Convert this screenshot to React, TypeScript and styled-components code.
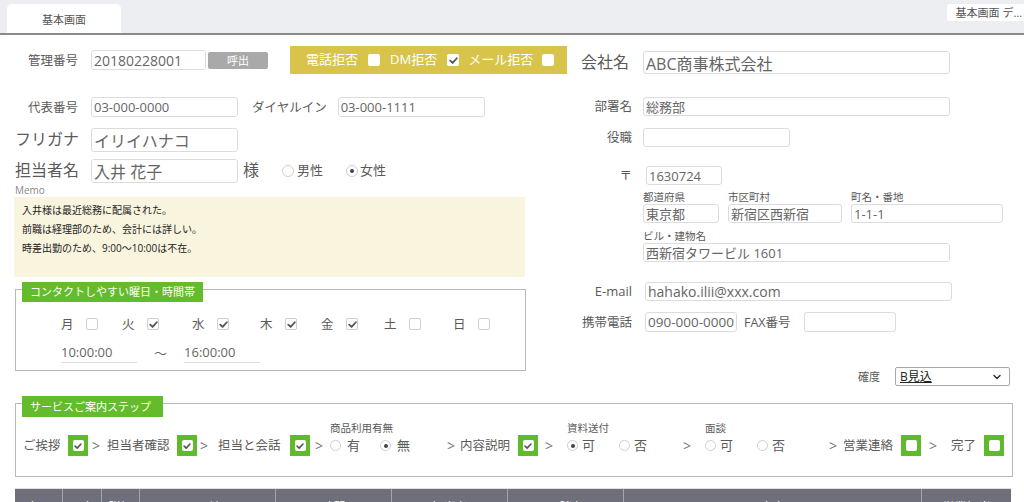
import React from "react";
import styled, { createGlobalStyle } from "styled-components";
import { ChevronDown } from "lucide-react";

const GlobalStyle = createGlobalStyle`
  html, body { margin: 0; padding: 0; background: #fff; }
  body {
    font-family: "Open Sans", "Noto Sans CJK JP", sans-serif;
    color: #555;
    overflow: hidden;
  }
  * { box-sizing: border-box; }
`;

const Page = styled.div`
  width: 1024px;
  height: 502px;
  overflow: hidden;
  background: #fff;
`;

const TabBar = styled.div`
  height: 35px;
  background: #eceef2;
  border-bottom: 2px solid #8a8a8a;
  display: flex;
  align-items: flex-start;
  padding: 4px 0 0 7px;
  overflow: hidden;
`;

const MainTab = styled.div`
  width: 114px;
  height: 29px;
  background: #fff;
  border-radius: 5px 5px 0 0;
  display: flex;
  align-items: center;
  justify-content: center;
  font-size: 11px;
  color: #555;
`;

const SideTab = styled.div`
  margin-left: auto;
  height: 17px;
  background: #fff;
  border-radius: 3px 0 0 3px;
  padding: 0 2px 0 9px;
  font-size: 11px;
  line-height: 17px;
  white-space: nowrap;
  color: #555;
`;

const Body = styled.div`
  padding: 0 12px 0 15px;
`;

const TopArea = styled.div`
  display: flex;
  align-items: flex-start;
`;

const LeftCol = styled.div`
  width: 560px;
  flex-shrink: 0;
  display: flex;
  flex-direction: column;
`;

const RightCol = styled.div`
  width: 435px;
  flex-shrink: 0;
  display: flex;
  flex-direction: column;
`;

const Row = styled.div<{ $mt?: number; $h: number; $end?: boolean }>`
  display: flex;
  align-items: center;
  justify-content: ${(p) => (p.$end ? "flex-end" : "flex-start")};
  margin-top: ${(p) => p.$mt ?? 0}px;
  height: ${(p) => p.$h}px;
`;

const Label = styled.span<{ $w?: number; $size?: number; $ml?: number; $left?: boolean }>`
  width: ${(p) => (p.$w ? `${p.$w}px` : "auto")};
  flex-shrink: 0;
  margin-left: ${(p) => p.$ml ?? 0}px;
  font-size: ${(p) => p.$size ?? 12.5}px;
  line-height: 1.2;
  text-align: ${(p) => (p.$left ? "left" : "right")};
  color: #5a5a5a;
  white-space: nowrap;
`;

const Field = styled.input<{ $w: number; $h: number; $size?: number; $ml?: number }>`
  width: ${(p) => p.$w}px;
  height: ${(p) => p.$h}px;
  margin: 0 0 0 ${(p) => p.$ml ?? 0}px;
  flex-shrink: 0;
  border: 1px solid #dcdcdc;
  border-radius: 3px;
  background: #fff;
  padding: 0 1px 0 2px;
  font-family: "Open Sans", "Noto Sans CJK JP", sans-serif;
  font-size: ${(p) => p.$size ?? 13}px;
  color: #666;
  outline: none;
`;

const CallButton = styled.button`
  margin-left: 2px;
  width: 60px;
  height: 17px;
  background: #a9a9a9;
  border: none;
  border-radius: 2px;
  color: #fff;
  font-size: 11px;
  font-family: "Open Sans", "Noto Sans CJK JP", sans-serif;
  padding: 0;
  line-height: 17px;
`;

const RefusalBox = styled.div`
  margin-left: 22px;
  width: 277px;
  height: 28px;
  background: #d8c44a;
  display: flex;
  align-items: center;
  padding-left: 16px;
`;

const RefusalText = styled.span<{ $ml?: number }>`
  margin-left: ${(p) => p.$ml ?? 0}px;
  color: #fff;
  font-size: 13px;
  line-height: 1.2;
  white-space: nowrap;
`;

const CheckSquare = styled.span<{ $ml?: number; $bordered?: boolean; $size?: number }>`
  display: inline-flex;
  align-items: center;
  justify-content: center;
  flex-shrink: 0;
  width: ${(p) => p.$size ?? 12}px;
  height: ${(p) => p.$size ?? 12}px;
  margin-left: ${(p) => p.$ml ?? 0}px;
  background: #fff;
  border-radius: 2px;
  border: ${(p) => (p.$bordered ? "1px solid #cfcfcf" : "none")};
`;

const CheckMark = ({ size = 9 }: { size?: number }) => (
  <svg width={size} height={size} viewBox="0 0 10 10">
    <path
      d="M1.4 5.2 L4 7.7 L8.7 2.5"
      fill="none"
      stroke="#555"
      strokeWidth="2"
      strokeLinecap="round"
      strokeLinejoin="round"
    />
  </svg>
);

function Check({
  checked,
  ml,
  bordered,
  size,
}: {
  checked?: boolean;
  ml?: number;
  bordered?: boolean;
  size?: number;
}) {
  return (
    <CheckSquare $ml={ml} $bordered={bordered} $size={size}>
      {checked && <CheckMark size={size ? size - 3 : 9} />}
    </CheckSquare>
  );
}

const RadioCircle = styled.span<{ $on?: boolean; $ml?: number; $size?: number }>`
  width: ${(p) => p.$size ?? 11}px;
  height: ${(p) => p.$size ?? 11}px;
  margin-left: ${(p) => p.$ml ?? 0}px;
  border-radius: 50%;
  border: 1px solid #cfcfcf;
  background: #fff;
  flex-shrink: 0;
  display: inline-flex;
  align-items: center;
  justify-content: center;
  &::after {
    content: "";
    width: 4px;
    height: 4px;
    border-radius: 50%;
    background: #444;
    display: ${(p) => (p.$on ? "block" : "none")};
  }
`;

const RadioText = styled.span<{ $ml?: number; $size?: number }>`
  margin-left: ${(p) => p.$ml ?? 3}px;
  font-size: ${(p) => p.$size ?? 13}px;
  line-height: 1.2;
  color: #5a5a5a;
  white-space: nowrap;
`;

const MemoLabel = styled.div`
  margin-top: 2px;
  height: 10px;
  font-size: 10px;
  line-height: 10px;
  color: #888;
`;

const MemoBox = styled.div`
  margin: 2px 0 0 -1px;
  width: 511px;
  height: 80px;
  background: #f8f4de;
  padding: 4px 8px;
  font-size: 10px;
  line-height: 19px;
  color: #222;
`;

const Group = styled.fieldset<{ $w: number; $mt: number; $pt: number; $pb: number }>`
  margin: ${(p) => p.$mt}px 0 0 0;
  width: ${(p) => p.$w}px;
  min-width: 0;
  padding: ${(p) => p.$pt}px 0 ${(p) => p.$pb}px 0;
  border: 1px solid #b9b9b9;
`;

const GroupLegend = styled.legend<{ $w: number; $h: number }>`
  position: relative;
  top: 3px;
  margin-left: 6px;
  width: ${(p) => p.$w}px;
  height: ${(p) => p.$h}px;
  line-height: ${(p) => p.$h}px;
  padding: 0 0 0 8px;
  background: #64bb2b;
  color: #fff;
  font-size: 11px;
  white-space: nowrap;
`;

const DayRow = styled.div`
  display: flex;
  align-items: center;
  height: 20px;
  padding-left: 45px;
`;

const DayItem = styled.div<{ $w?: number }>`
  width: ${(p) => (p.$w ? `${p.$w}px` : "auto")};
  display: flex;
  align-items: center;
  flex-shrink: 0;
`;

const DayChar = styled.span`
  width: 25px;
  font-size: 12.5px;
  line-height: 1.2;
  color: #5a5a5a;
`;

const TimeRow = styled.div`
  display: flex;
  align-items: flex-end;
  height: 21px;
  margin-top: 8px;
  padding-left: 45px;
`;

const TimeField = styled.div<{ $ml?: number }>`
  width: 76px;
  height: 21px;
  margin-left: ${(p) => p.$ml ?? 0}px;
  border-bottom: 1px solid #dcdcdc;
  font-size: 13px;
  line-height: 20px;
  color: #666;
`;

const Tilde = styled.span<{ $ml: number }>`
  margin-left: ${(p) => p.$ml}px;
  align-self: center;
  font-size: 13px;
  color: #666;
`;

const AddrRow = styled.div<{ $mt: number }>`
  display: flex;
  margin-top: ${(p) => p.$mt}px;
  padding-left: 68px;
`;

const AddrField = styled.div<{ $ml?: number }>`
  display: flex;
  flex-direction: column;
  margin-left: ${(p) => p.$ml ?? 0}px;
`;

const AddrLabel = styled.span`
  height: 11px;
  font-size: 10.5px;
  line-height: 11px;
  color: #5a5a5a;
  margin-bottom: 1px;
  white-space: nowrap;
`;

const SelectBox = styled.div`
  margin-left: 15px;
  width: 115px;
  height: 19px;
  border: 1px solid #a8a8a8;
  border-radius: 2px;
  display: flex;
  align-items: center;
  justify-content: space-between;
  padding: 0 6px 0 4px;
  font-size: 12px;
  color: #222;
  background: #fff;
`;

const SelectText = styled.span`
  text-decoration: underline;
  line-height: 1;
`;

const StepRow = styled.div`
  display: flex;
  align-items: flex-end;
  height: 35px;
  padding-left: 7px;
`;

const StepCell = styled.div<{ $w: number }>`
  width: ${(p) => p.$w}px;
  height: 21px;
  flex-shrink: 0;
  display: flex;
  align-items: center;
`;

const StepText = styled.span`
  font-size: 12.5px;
  line-height: 1.2;
  color: #5a5a5a;
  white-space: nowrap;
`;

const Arrow = styled.span`
  font-size: 14px;
  line-height: 1;
  color: #777;
  font-family: "Open Sans", sans-serif;
`;

const GreenFrame = styled.span`
  width: 20px;
  height: 21px;
  background: #5fbb2b;
  display: inline-flex;
  align-items: center;
  justify-content: center;
  flex-shrink: 0;
`;

const ChoiceGroup = styled.div<{ $w: number }>`
  width: ${(p) => p.$w}px;
  flex-shrink: 0;
  display: flex;
  flex-direction: column;
`;

const ChoiceLabel = styled.span`
  height: 14px;
  font-size: 10.5px;
  line-height: 14px;
  color: #5a5a5a;
  white-space: nowrap;
`;

const ChoiceRow = styled.div`
  display: flex;
  align-items: center;
  height: 21px;
`;

const ChoiceOption = styled.div<{ $w?: number }>`
  width: ${(p) => (p.$w ? `${p.$w}px` : "auto")};
  display: flex;
  align-items: center;
  flex-shrink: 0;
`;

const TableHead = styled.div`
  margin-top: 11px;
  width: 996px;
  height: 30px;
  display: grid;
  grid-template-columns: 48px 39px 38px 136px 116px 116px 116px 298px 89px;
  background: #6f6f7b;
  border-top: 1px solid #dfdfe3;
`;

const HeadCell = styled.div<{ $last?: boolean }>`
  display: flex;
  align-items: center;
  justify-content: center;
  color: #fff;
  font-size: 12px;
  padding-top: 6px;
  border-right: ${(p) => (p.$last ? "none" : "1px solid #a3a3ab")};
  white-space: nowrap;
  overflow: hidden;
`;

function GreenCheck({ checked }: { checked?: boolean }) {
  return (
    <GreenFrame>
      <Check checked={checked} size={11} />
    </GreenFrame>
  );
}

const days = [
  { c: "月", w: 61, on: false },
  { c: "火", w: 70, on: true },
  { c: "水", w: 68, on: true },
  { c: "木", w: 61, on: true },
  { c: "金", w: 63, on: true },
  { c: "土", w: 69, on: false },
  { c: "日", w: 0, on: false },
];

const heads = ["表示", "入力", "詳細", "日付", "時間", "担当者", "面談者", "内容", "営業担当"];

export default function App() {
  return (
    <>
      <GlobalStyle />
      <Page>
        <TabBar>
          <MainTab>基本画面</MainTab>
          <SideTab>基本画面 デ…</SideTab>
        </TabBar>
        <Body>
          <TopArea>
            <LeftCol>
              <Row $mt={11} $h={28}>
                <Label $w={63}>管理番号</Label>
                <Field $ml={13} $w={115} $h={20} $size={14} defaultValue="20180228001" readOnly />
                <CallButton>呼出</CallButton>
                <RefusalBox>
                  <RefusalText>電話拒否</RefusalText>
                  <Check ml={10} />
                  <RefusalText $ml={10}>DM拒否</RefusalText>
                  <Check ml={10} checked />
                  <RefusalText $ml={9}>メール拒否</RefusalText>
                  <Check ml={9} />
                </RefusalBox>
              </Row>
              <Row $mt={23} $h={20}>
                <Label $w={63}>代表番号</Label>
                <Field $ml={13} $w={147} $h={20} defaultValue="03-000-0000" readOnly />
                <Label $ml={14} $left>ダイヤルイン</Label>
                <Field $ml={11} $w={147} $h={20} defaultValue="03-000-1111" readOnly />
              </Row>
              <Row $mt={11} $h={24}>
                <Label $w={63} $size={16}>フリガナ</Label>
                <Field $ml={13} $w={147} $h={24} $size={16} defaultValue="イリイハナコ" readOnly />
              </Row>
              <Row $mt={7} $h={24}>
                <Label $w={63} $size={16}>担当者名</Label>
                <Field $ml={13} $w={147} $h={24} $size={16} defaultValue="入井 花子" readOnly />
                <Label $ml={5} $size={16} $left>様</Label>
                <RadioCircle $ml={23} $size={12} />
                <RadioText $ml={3}>男性</RadioText>
                <RadioCircle $ml={23} $size={12} $on />
                <RadioText $ml={2}>女性</RadioText>
              </Row>
              <MemoLabel>Memo</MemoLabel>
              <MemoBox>
                <div>入井様は最近総務に配属された。</div>
                <div>前職は経理部のため、会計には詳しい。</div>
                <div>時差出勤のため、9:00〜10:00は不在。</div>
              </MemoBox>
              <Group $w={511} $mt={2} $pt={15} $pb={7}>
                <GroupLegend $w={181} $h={20}>コンタクトしやすい曜日・時間帯</GroupLegend>
                <DayRow>
                  {days.map((d) => (
                    <DayItem key={d.c} $w={d.w || undefined}>
                      <DayChar>{d.c}</DayChar>
                      <Check bordered checked={d.on} />
                    </DayItem>
                  ))}
                </DayRow>
                <TimeRow>
                  <TimeField>10:00:00</TimeField>
                  <Tilde $ml={17}>〜</Tilde>
                  <TimeField $ml={17}>16:00:00</TimeField>
                </TimeRow>
              </Group>
            </LeftCol>

            <RightCol>
              <Row $mt={16} $h={23}>
                <Label $w={54} $size={16}>会社名</Label>
                <Field $ml={14} $w={307} $h={23} $size={16} defaultValue="ABC商事株式会社" readOnly />
              </Row>
              <Row $mt={23} $h={19}>
                <Label $w={57}>部署名</Label>
                <Field $ml={11} $w={307} $h={19} defaultValue="総務部" readOnly />
              </Row>
              <Row $mt={12} $h={19}>
                <Label $w={57}>役職</Label>
                <Field $ml={11} $w={147} $h={19} readOnly />
              </Row>
              <Row $mt={19} $h={19}>
                <Label $w={57}>〒</Label>
                <Field $ml={14} $w={76} $h={19} defaultValue="1630724" readOnly />
              </Row>
              <AddrRow $mt={7}>
                <AddrField>
                  <AddrLabel>都道府県</AddrLabel>
                  <Field $w={76} $h={19} defaultValue="東京都" readOnly />
                </AddrField>
                <AddrField $ml={9}>
                  <AddrLabel>市区町村</AddrLabel>
                  <Field $w={114} $h={19} defaultValue="新宿区西新宿" readOnly />
                </AddrField>
                <AddrField $ml={9}>
                  <AddrLabel>町名・番地</AddrLabel>
                  <Field $w={152} $h={19} defaultValue="1-1-1" readOnly />
                </AddrField>
              </AddrRow>
              <AddrRow $mt={8}>
                <AddrField>
                  <AddrLabel>ビル・建物名</AddrLabel>
                  <Field $w={307} $h={19} defaultValue="西新宿タワービル 1601" readOnly />
                </AddrField>
              </AddrRow>
              <Row $mt={20} $h={19}>
                <Label $w={57} $size={13}>E-mail</Label>
                <Field $ml={13} $w={307} $h={19} $size={14} defaultValue="hahako.ilii@xxx.com" readOnly />
              </Row>
              <Row $mt={11} $h={20}>
                <Label $w={57}>携帯電話</Label>
                <Field $ml={13} $w={92} $h={20} $size={13.5} defaultValue="090-000-0000" readOnly />
                <Label $ml={7} $left>FAX番号</Label>
                <Field $ml={13} $w={92} $h={20} readOnly />
              </Row>
              <Row $mt={35} $h={19} $end>
                <Label $size={11}>確度</Label>
                <SelectBox>
                  <SelectText>B見込</SelectText>
                  <ChevronDown size={12} strokeWidth={3} color="#333" />
                </SelectBox>
              </Row>
            </RightCol>
          </TopArea>

          <Group $w={998} $mt={7} $pt={7} $pb={20}>
            <GroupLegend $w={141} $h={21}>サービスご案内ステップ</GroupLegend>
            <StepRow>
              <StepCell $w={45}><StepText>ご挨拶</StepText></StepCell>
              <StepCell $w={24}><GreenCheck checked /></StepCell>
              <StepCell $w={15}><Arrow>&gt;</Arrow></StepCell>
              <StepCell $w={70}><StepText>担当者確認</StepText></StepCell>
              <StepCell $w={23}><GreenCheck checked /></StepCell>
              <StepCell $w={18}><Arrow>&gt;</Arrow></StepCell>
              <StepCell $w={72}><StepText>担当と会話</StepText></StepCell>
              <StepCell $w={25}><GreenCheck checked /></StepCell>
              <StepCell $w={15}><Arrow>&gt;</Arrow></StepCell>
              <ChoiceGroup $w={117}>
                <ChoiceLabel>商品利用有無</ChoiceLabel>
                <ChoiceRow>
                  <ChoiceOption $w={50}>
                    <RadioCircle />
                    <RadioText $ml={6}>有</RadioText>
                  </ChoiceOption>
                  <ChoiceOption>
                    <RadioCircle $on />
                    <RadioText $ml={6}>無</RadioText>
                  </ChoiceOption>
                </ChoiceRow>
              </ChoiceGroup>
              <StepCell $w={13}><Arrow>&gt;</Arrow></StepCell>
              <StepCell $w={58}><StepText>内容説明</StepText></StepCell>
              <StepCell $w={27}><GreenCheck checked /></StepCell>
              <StepCell $w={22}><Arrow>&gt;</Arrow></StepCell>
              <ChoiceGroup $w={116}>
                <ChoiceLabel>資料送付</ChoiceLabel>
                <ChoiceRow>
                  <ChoiceOption $w={52}>
                    <RadioCircle $on />
                    <RadioText $ml={4}>可</RadioText>
                  </ChoiceOption>
                  <ChoiceOption>
                    <RadioCircle />
                    <RadioText $ml={4}>否</RadioText>
                  </ChoiceOption>
                </ChoiceRow>
              </ChoiceGroup>
              <StepCell $w={22}><Arrow>&gt;</Arrow></StepCell>
              <ChoiceGroup $w={124}>
                <ChoiceLabel>面談</ChoiceLabel>
                <ChoiceRow>
                  <ChoiceOption $w={52}>
                    <RadioCircle />
                    <RadioText $ml={4}>可</RadioText>
                  </ChoiceOption>
                  <ChoiceOption>
                    <RadioCircle />
                    <RadioText $ml={4}>否</RadioText>
                  </ChoiceOption>
                </ChoiceRow>
              </ChoiceGroup>
              <StepCell $w={14}><Arrow>&gt;</Arrow></StepCell>
              <StepCell $w={58}><StepText>営業連絡</StepText></StepCell>
              <StepCell $w={28}><GreenCheck /></StepCell>
              <StepCell $w={22}><Arrow>&gt;</Arrow></StepCell>
              <StepCell $w={33}><StepText>完了</StepText></StepCell>
              <StepCell $w={20}><GreenCheck /></StepCell>
            </StepRow>
          </Group>

          <TableHead>
            {heads.map((h, i) => (
              <HeadCell key={h} $last={i === heads.length - 1}>{h}</HeadCell>
            ))}
          </TableHead>
        </Body>
      </Page>
    </>
  );
}
